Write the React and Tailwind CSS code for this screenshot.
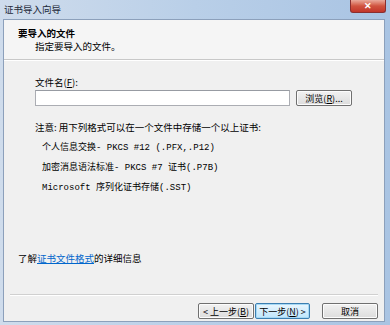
import React from "react";

const cjk = { fontFamily: '"Noto Sans CJK SC", "Liberation Sans", sans-serif' };
const mixed = { fontFamily: '"Liberation Mono", "Noto Sans CJK SC", monospace' };

function Btn({ children, focused, className = "" }) {
  return (
    <div
      className={
        "h-[16px] flex items-center justify-center rounded-[2px] border text-[9px] leading-none text-black " +
        (focused
          ? "border-[#3c7fb1] bg-gradient-to-b from-[#eaf6fd] to-[#bee6fd] shadow-[inset_0_0_0_1px_#a7d9f5] "
          : "border-[#707070] bg-gradient-to-b from-[#f2f2f2] to-[#dcdcdc] shadow-[inset_0_0_0_1px_#fcfcfc] ") +
        className
      }
    >
      {children}
    </div>
  );
}

export default function App() {
  return (
    <div
      className="w-[390px] h-[325px] overflow-hidden flex flex-col bg-gradient-to-r from-[#cfdcec] via-[#b9cfe8] to-[#a9c4e3] text-black"
      style={cjk}
    >
      {/* title bar */}
      <div className="h-[19px] flex items-start justify-between">
        <div className="pl-[4px] pt-[3px] text-[9.5px] leading-[12px] text-[#1e2a3a]">证书导入向导</div>
        <div className="mr-[4px] w-[36px] h-[13px] rounded-b-[3px] border border-t-0 border-[#8a2f2f] bg-gradient-to-b from-[#e9a99b] via-[#d0533f] to-[#c2352a] flex items-center justify-center">
          <span className="text-white text-[9px] font-bold leading-none" style={{ fontFamily: '"Liberation Sans", sans-serif' }}>
            ✕
          </span>
        </div>
      </div>

      {/* client area */}
      <div className="ml-[3px] w-[382px] h-[303px] border border-[#8ca0bb] bg-[#f0f0f0] flex flex-col">
        <div className="h-[39px] bg-[#f5f5f5] pl-[14px] pt-[7px]">
          <div className="text-[9.5px] leading-[13px] font-bold">要导入的文件</div>
          <div className="pl-[17px] text-[9.5px] leading-[13px]">指定要导入的文件。</div>
        </div>
        <div className="h-px bg-[#c8c8c8]" />
        <div className="h-px bg-white" />

        <div className="pl-[31px] mt-[15px] text-[9.5px] leading-[13px]">文件名(<span className="underline">F</span>):</div>
        <div className="pl-[31px] mt-[1px] flex items-center">
          <div className="w-[255px] h-[16px] bg-white border border-[#abadb3] border-t-[#979ba2]" />
          <Btn className="ml-[6px] w-[56px]">浏览(<span className="underline">R</span>)...</Btn>
        </div>

        <div className="pl-[31px] mt-[15px] text-[9.5px] leading-[13px]">注意: 用下列格式可以在一个文件中存储一个以上证书:</div>
        <div className="pl-[38px] mt-[6px] flex flex-col gap-[5px] text-[9px] leading-[13px]" style={mixed}>
          <div>
            <span style={cjk}>个人信息交换</span>- PKCS #12 (.PFX,.P12)
          </div>
          <div>
            <span style={cjk}>加密消息语法标准</span>- PKCS #7 <span style={cjk}>证书</span>(.P7B)
          </div>
          <div>
            Microsoft <span style={cjk}>序列化证书存储</span>(.SST)
          </div>
        </div>

        <div className="pl-[14px] mt-[57px] text-[9.5px] leading-[13px]">
          了解<span className="text-[#0066cc] underline">证书文件格式</span>的详细信息
        </div>

        <div className="mt-[29px] ml-[6px] mr-[6px] h-px bg-[#d0d0d0]" />
        <div className="ml-[6px] mr-[6px] h-px bg-white" />

        <div className="mt-[7px] pr-[6px] flex justify-end">
          <Btn className="w-[56px]">&lt; 上一步(<span className="underline">B</span>)</Btn>
          <Btn focused className="ml-[1px] w-[55px]">下一步(<span className="underline">N</span>) &gt;</Btn>
          <Btn className="ml-[12px] w-[56px]">取消</Btn>
        </div>
      </div>
    </div>
  );
}
